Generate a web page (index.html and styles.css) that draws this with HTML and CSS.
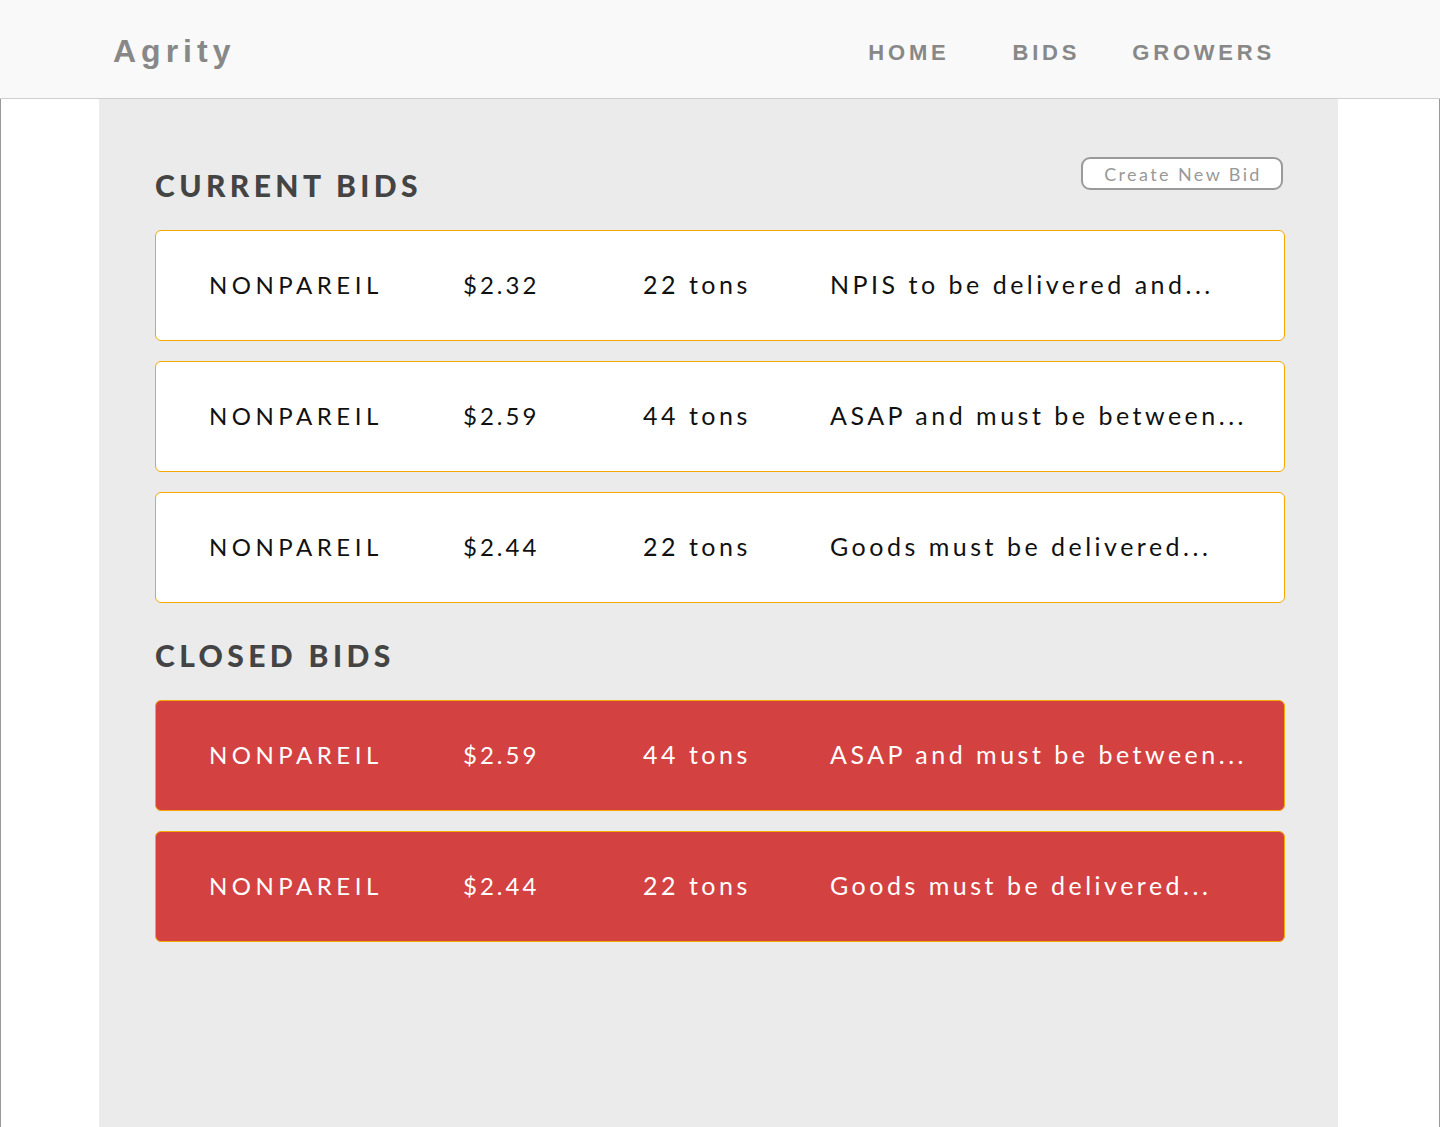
FILE: index.html
```html
<!DOCTYPE html>
<html lang="en">
<head>
<meta charset="utf-8">
<title>Agrity - Bids</title>
<link rel="stylesheet" href="styles.css">
</head>
<body>
<header class="topbar">
  <div class="logo">Agrity</div>
  <nav class="nav">
    <a class="nav-link" href="#">HOME</a>
    <a class="nav-link nav-bids" href="#">BIDS</a>
    <a class="nav-link nav-growers" href="#">GROWERS</a>
  </nav>
</header>
<div class="page">
  <main class="content">
    <div class="section-head">
      <h2 class="section-title">CURRENT BIDS</h2>
      <button class="create-btn">Create New Bid</button>
    </div>
    <div class="bid-list">
      <div class="bid">
        <span class="c-name">NONPAREIL</span>
        <span class="c-price">$2.32</span>
        <span class="c-qty">22 tons</span>
        <span class="c-desc">NPIS to be delivered and...</span>
      </div>
      <div class="bid">
        <span class="c-name">NONPAREIL</span>
        <span class="c-price">$2.59</span>
        <span class="c-qty">44 tons</span>
        <span class="c-desc">ASAP and must be between...</span>
      </div>
      <div class="bid">
        <span class="c-name">NONPAREIL</span>
        <span class="c-price">$2.44</span>
        <span class="c-qty">22 tons</span>
        <span class="c-desc">Goods must be delivered...</span>
      </div>
    </div>
    <div class="section-head closed-head">
      <h2 class="section-title">CLOSED BIDS</h2>
    </div>
    <div class="bid-list">
      <div class="bid closed">
        <span class="c-name">NONPAREIL</span>
        <span class="c-price">$2.59</span>
        <span class="c-qty">44 tons</span>
        <span class="c-desc">ASAP and must be between...</span>
      </div>
      <div class="bid closed">
        <span class="c-name">NONPAREIL</span>
        <span class="c-price">$2.44</span>
        <span class="c-qty">22 tons</span>
        <span class="c-desc">Goods must be delivered...</span>
      </div>
    </div>
  </main>
</div>
</body>
</html>
```

FILE: styles.css
```css
* { box-sizing: border-box; }
html, body { margin: 0; padding: 0; }
body {
  background: #ffffff;
  font-family: "Lato", "Open Sans", sans-serif;
  min-height: 1127px;
}
.topbar {
  height: 99px;
  background: #f9f9f9;
  border-bottom: 1px solid #cfcfcf;
  display: flex;
  align-items: center;
  justify-content: space-between;
  padding: 0 165px 0 113px;
}
.logo {
  font-family: "Liberation Sans", Arial, sans-serif;
  font-weight: bold;
  font-size: 32px;
  letter-spacing: 5px;
  color: #888888;
  margin-top: 4px;
}
.nav {
  display: flex;
  margin-top: 8px;
}
.nav-link {
  font-family: "Liberation Sans", Arial, sans-serif;
  font-weight: bold;
  font-size: 22px;
  letter-spacing: 3.8px;
  color: #888888;
  text-decoration: none;
}
.nav-bids { margin-left: 63px; }
.nav-growers { margin-left: 52px; }
.page {
  border-left: 1px solid #999;
  border-right: 1px solid #999;
  min-height: 1028px;
  padding-left: 98px;
}
.content {
  width: 1239px;
  min-height: 1028px;
  background: #ebebeb;
  padding: 58px 53px 40px 56px;
}
.section-head {
  display: flex;
  justify-content: space-between;
  align-items: flex-start;
  height: 73px;
}
.section-title {
  margin: 0;
  padding-top: 10px;
  font-family: "Lato", sans-serif;
  font-weight: 900;
  font-size: 30px;
  line-height: 36px;
  letter-spacing: 4.4px;
  color: #444444;
}
.create-btn {
  margin: 0 2px 0 0;
  width: 202px;
  height: 33px;
  border: 2px solid #9a9a9a;
  border-radius: 9px;
  background: #ffffff;
  color: #999999;
  font-family: "Lato", sans-serif;
  font-size: 18px;
  letter-spacing: 2.4px;
  padding: 0 0 0 2px;
}
.closed-head {
  margin-top: 34px;
  height: 63px;
}
.closed-head .section-title { padding-top: 0; }
.bid-list {
  display: flex;
  flex-direction: column;
  gap: 20px;
}
.bid {
  height: 111px;
  background: #ffffff;
  border: 1px solid #f5a800;
  border-radius: 6px;
  display: grid;
  grid-template-columns: 254px 180px 187px 1fr;
  align-items: center;
  padding: 0 0 3px 53px;
  font-family: "Lato", sans-serif;
  font-size: 24px;
  letter-spacing: 3px;
  color: #111111;
  white-space: nowrap;
}
.c-name { letter-spacing: 4.5px; }
.c-qty, .c-desc { font-size: 25px; letter-spacing: 3.5px; }
.bid.closed {
  background: #d44141;
  color: #ffffff;
}
```
